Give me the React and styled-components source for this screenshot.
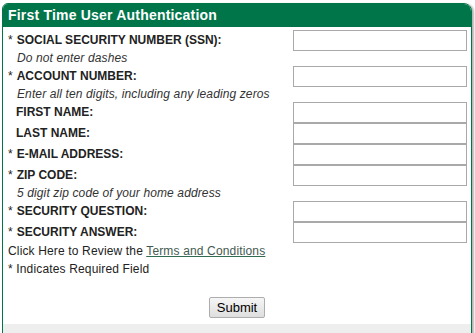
import React from "react";
import styled, { createGlobalStyle } from "styled-components";

const GlobalStyle = createGlobalStyle`
body {
    margin: 0;
    padding: 3px 0 0 2px;
    background: #fff;
    font-family: "Liberation Sans", Arial, sans-serif;
}
`

const Panel = styled.div`
width: 470px;
box-sizing: border-box;
border: 1px solid #00754a;
border-radius: 6px 8px 0 0;
box-shadow: 2px 1px 2px #b5b5b5;
background: #fff;
`
const Titulo = styled.h2`
margin: 0;
height: 23px;
background: #00754a;
color: #fff;
font-size: 14px;
font-weight: bold;
letter-spacing: 0.2px;
line-height: 23px;
padding-left: 5px;
border-radius: 5px 7px 0 0;
`
const Formulario = styled.form`
display: grid;
grid-template-columns: 290px 174px;
padding-top: 3px;
`
const Rotulo = styled.label`
display: flex;
align-items: center;
height: 20px;
padding-bottom: 1px;
padding-left: ${props => props.required ? "5px" : "13px"};
font-size: 12px;
font-weight: bold;
color: #222;
white-space: nowrap;
span {
    font-weight: normal;
    margin-right: 4px;
}
`
const Campo = styled.input`
box-sizing: border-box;
width: 174px;
height: 21px;
margin: 0;
border: 1px solid #a9a9a9;
padding: 0 3px;
font-family: inherit;
font-size: 12px;
outline: none;
`
const Dica = styled.div`
grid-column: 1 / 3;
height: 15px;
line-height: 14px;
padding-left: 14px;
font-size: 12px;
font-style: italic;
letter-spacing: 0.12px;
color: #333;
`
const Linha = styled.div`
height: 18px;
line-height: 17px;
padding-left: 5px;
font-size: 12px;
letter-spacing: 0.15px;
color: #222;
a {
    color: #445a50;
    text-decoration: underline;
    text-decoration-color: #2f6b50;
}
`
const Acoes = styled.div`
display: flex;
justify-content: center;
padding: 18px 0 6px;
`
const Botao = styled.button`
width: 56px;
height: 21px;
padding: 0;
font-family: inherit;
font-size: 13px;
color: #000;
border: 1px solid #adadad;
border-radius: 2px;
background: linear-gradient(#f6f6f6, #dedede);
`
const Rodape = styled.div`
height: 20px;
background: #eee;
`

const campos = [
    { rotulo: "SOCIAL SECURITY NUMBER (SSN):", obrigatorio: true, dica: "Do not enter dashes", foco: true },
    { rotulo: "ACCOUNT NUMBER:", obrigatorio: true, dica: "Enter all ten digits, including any leading zeros" },
    { rotulo: "FIRST NAME:" },
    { rotulo: "LAST NAME:" },
    { rotulo: "E-MAIL ADDRESS:", obrigatorio: true },
    { rotulo: "ZIP CODE:", obrigatorio: true, dica: "5 digit zip code of your home address" },
    { rotulo: "SECURITY QUESTION:", obrigatorio: true },
    { rotulo: "SECURITY ANSWER:", obrigatorio: true },
]

export default function App() {
    return (
        <>
            <GlobalStyle />
            <Panel>
                <Titulo>First Time User Authentication</Titulo>
                <Formulario onSubmit={e => e.preventDefault()}>
                    {campos.map(c => (
                        <React.Fragment key={c.rotulo}>
                            <Rotulo required={c.obrigatorio}>
                                {c.obrigatorio && <span>*</span>}
                                {c.rotulo}
                            </Rotulo>
                            <Campo type="text" autoFocus={c.foco} />
                            {c.dica && <Dica>{c.dica}</Dica>}
                        </React.Fragment>
                    ))}
                </Formulario>
                <Linha>Click Here to Review the <a href="#">Terms and Conditions</a></Linha>
                <Linha>* Indicates Required Field</Linha>
                <Acoes>
                    <Botao type="button">Submit</Botao>
                </Acoes>
                <Rodape />
            </Panel>
        </>
    )
}
